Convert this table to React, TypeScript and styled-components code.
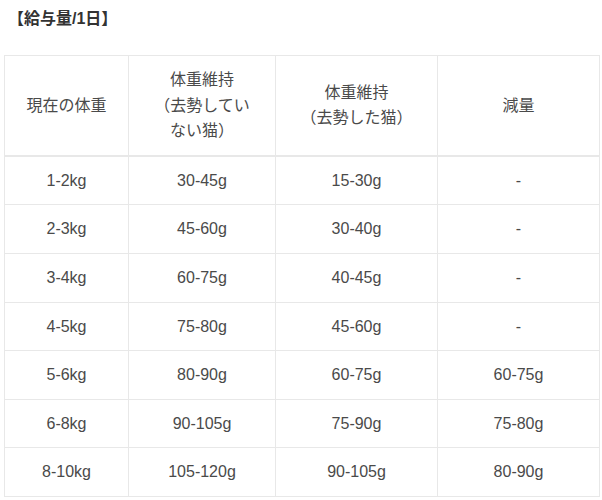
import React from 'react';
import styled, { createGlobalStyle } from 'styled-components';

const GlobalStyle = createGlobalStyle`
  html, body {
    margin: 0;
    padding: 0;
    background: #fff;
  }
  body {
    font-family: "Liberation Sans", Arial, "Noto Sans CJK JP", sans-serif;
    color: #444;
  }
`;

const Page = styled.div`
  width: 602px;
  padding: 6px 3px 0 4px;
  box-sizing: border-box;
`;

const Title = styled.h3`
  margin: 0 0 23px;
  padding-left: 4px;
  font-size: 16px;
  line-height: 26px;
  font-weight: 700;
  color: #333;
`;

const Table = styled.table`
  width: 595px;
  border-collapse: collapse;
  table-layout: fixed;
  font-size: 16px;
  line-height: 1.6;
`;

const HeadCell = styled.th<{ $w: number }>`
  box-sizing: border-box;
  width: ${({ $w }) => $w}px;
  padding: 11px 14px;
  border: 1px solid #e8e8e8;
  border-bottom: 2px solid #e8e8e8;
  font-weight: 400;
  color: #4a4a4a;
  text-align: center;
  vertical-align: middle;
`;

const Cell = styled.td`
  box-sizing: border-box;
  padding: 11px 14px;
  border: 1px solid #e8e8e8;
  color: #4a4a4a;
  text-align: center;
  vertical-align: middle;
`;

const columns = [
  { w: 124, label: <>現在の体重</> },
  { w: 147, label: <>体重維持<br />（去勢してい<br />ない猫）</> },
  { w: 162, label: <>体重維持<br />（去勢した猫）</> },
  { w: 162, label: <>減量</> },
];

const rows = [
  ['1-2kg', '30-45g', '15-30g', '-'],
  ['2-3kg', '45-60g', '30-40g', '-'],
  ['3-4kg', '60-75g', '40-45g', '-'],
  ['4-5kg', '75-80g', '45-60g', '-'],
  ['5-6kg', '80-90g', '60-75g', '60-75g'],
  ['6-8kg', '90-105g', '75-90g', '75-80g'],
  ['8-10kg', '105-120g', '90-105g', '80-90g'],
];

const App: React.FC = () => {
  return (
    <>
      <GlobalStyle />
      <Page>
        <Title>【給与量/1日】</Title>
        <Table>
          <thead>
            <tr>
              {columns.map((col, i) => (
                <HeadCell key={i} $w={col.w}>{col.label}</HeadCell>
              ))}
            </tr>
          </thead>
          <tbody>
            {rows.map((row) => (
              <tr key={row[0]}>
                {row.map((value, i) => (
                  <Cell key={i}>{value}</Cell>
                ))}
              </tr>
            ))}
          </tbody>
        </Table>
      </Page>
    </>
  );
};

export default App;
